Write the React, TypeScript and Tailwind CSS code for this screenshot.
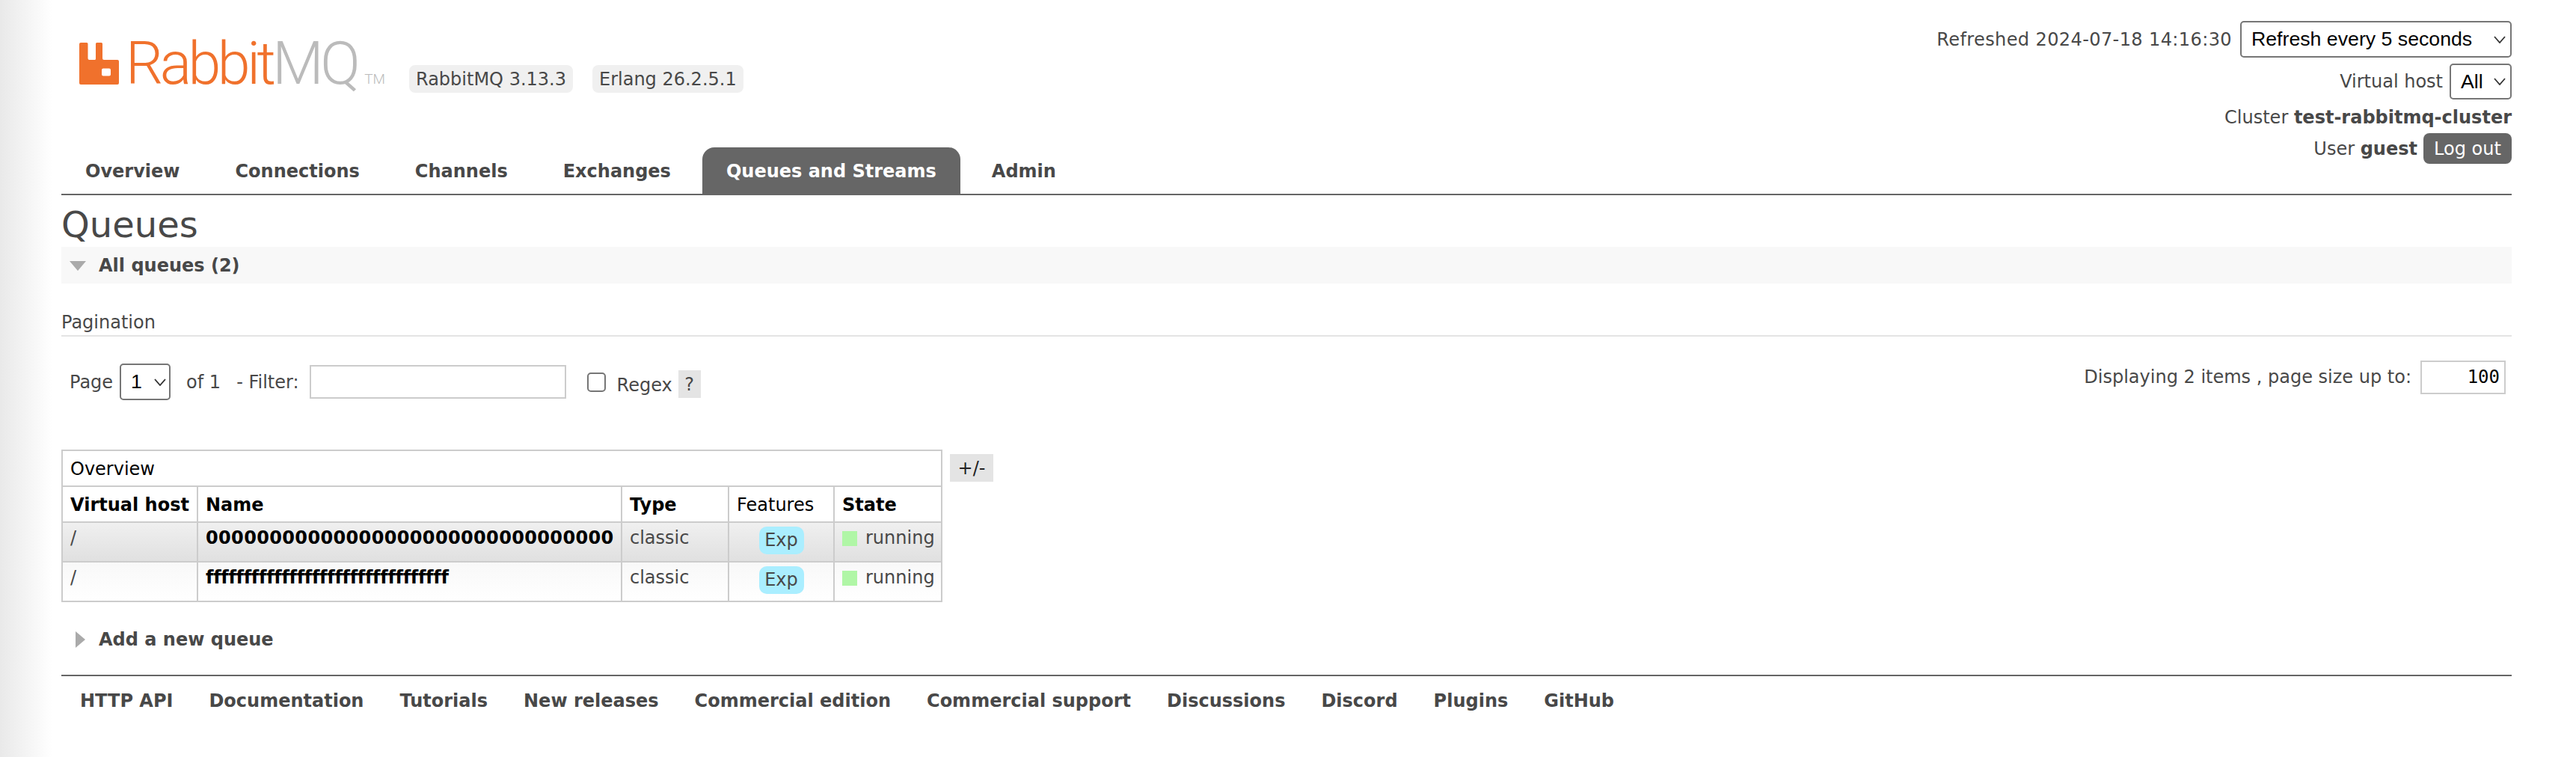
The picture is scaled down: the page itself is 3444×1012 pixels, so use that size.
import { FC, ReactNode } from "react";

const tabs = ["Overview", "Connections", "Channels", "Exchanges", "Queues and Streams", "Admin"];
const footerLinks = [
  "HTTP API",
  "Documentation",
  "Tutorials",
  "New releases",
  "Commercial edition",
  "Commercial support",
  "Discussions",
  "Discord",
  "Plugins",
  "GitHub",
];
const queues = [
  {
    name: "00000000000000000000000000000000",
    row: "bg-gradient-to-b from-[#f0f0f0] to-[#e0e0e0]",
    spacing: "tracking-[0.35px]",
  },
  {
    name: "ffffffffffffffffffffffffffffffff",
    row: "bg-gradient-to-b from-[#f8f8f8] to-[#ffffff]",
    spacing: "tracking-[-0.3px]",
  },
];

const Logo: FC = () => (
  <div className="flex items-start w-[441px] h-[60px]">
    <svg width="53" height="56" viewBox="0 0 53 56" className="shrink-0">
      <path
        fill="#f0712c"
        fillRule="evenodd"
        d="M2 0h8a1.5 1.5 0 0 1 1.500 1.500V21a2 2 0 0 0 2 2h7a1.500 1.500 0 0 0 1.500-1.500V1.500A1.500 1.500 0 0 1 23.500 0h6a1.500 1.500 0 0 1 1.500 1.500V21a2 2 0 0 0 2 2h18a2 2 0 0 1 2 2v29a2 2 0 0 1-2 2H2a2 2 0 0 1-2-2V2a2 2 0 0 1 2-2zm30 34.500a2 2 0 0 0-2 2v6a2 2 0 0 0 2 2h8a2 2 0 0 0 2-2v-6a2 2 0 0 0-2-2z"
      />
    </svg>
    <span className="font-['Roboto',sans-serif] font-light text-[79px] leading-[56px] tracking-[-4.5px] ml-[9px] text-[#f0712c] h-[56px]">
      Rabbit<span className="text-[#bbbbbb]">MQ</span>
    </span>
    <span className="font-['Roboto',sans-serif] font-light text-[19px] leading-[14px] text-[#bbbbbb] mt-[42px] ml-[10px]">TM</span>
  </div>
);

const Badge: FC<{ children: ReactNode }> = ({ children }) => (
  <span className="inline-flex items-center justify-center h-[37px] px-[9px] bg-[#f0f0f0] rounded-[8px] text-[24px] leading-none">
    {children}
  </span>
);

const SelectArrow: FC = () => (
  <svg width="16" height="10" viewBox="0 0 16 10" className="shrink-0">
    <polyline points="1,1 8,9 15,1" fill="none" stroke="#333333" strokeWidth="1.800" />
  </svg>
);

const FakeSelect: FC<{ label: string; className: string }> = ({ label, className }) => (
  <div className={`flex items-center justify-between bg-white border-2 border-[#767676] rounded-[5px] pl-[13px] pr-[6px] font-['Liberation_Sans',sans-serif] text-[26.7px] text-black ${className}`}>
    <span>{label}</span>
    <SelectArrow />
  </div>
);

export default function App() {
  return (
    <div className="min-h-[1012px] bg-gradient-to-r from-[#e9e9e9] to-white bg-no-repeat bg-[length:70px_100%] pl-[82px] pr-[86px] font-['DejaVu_Sans',sans-serif] text-[24px] text-[#484848]">
      <header className="flex justify-between h-[261px] border-b-2 border-[#666666]">
        <div className="flex flex-col justify-between">
          <div className="flex items-start pt-[57px] pl-[24px]">
            <Logo />
            <div className="flex gap-[26px] mt-[30px]">
              <Badge>RabbitMQ 3.13.3</Badge>
              <Badge>Erlang 26.2.5.1</Badge>
            </div>
          </div>
          <nav className="flex gap-[10px] h-[62px]">
            {tabs.map((tab) => (
              <a
                key={tab}
                className={`flex items-center px-[32px] pt-[2px] font-bold rounded-t-[16px] ${tab === "Queues and Streams" ? "bg-[#666666] text-white" : ""}`}
              >
                {tab}
              </a>
            ))}
          </nav>
        </div>
        <div className="flex flex-col items-end pt-[28px] leading-none">
          <div className="flex items-center gap-[11px]">
            <span className="tracking-[0.4px]">Refreshed 2024-07-18 14:16:30</span>
            <FakeSelect label="Refresh every 5 seconds" className="w-[363px] h-[49px]" />
          </div>
          <div className="flex items-center gap-[9px] mt-[8px]">
            <span>Virtual host</span>
            <FakeSelect label="All" className="w-[83px] h-[48px]" />
          </div>
          <div className="mt-[12px] h-[28px]">
            Cluster <b>test-rabbitmq-cluster</b>
          </div>
          <div className="flex items-center gap-[8px] mt-[5px]">
            <span>
              User <b>guest</b>
            </span>
            <span className="flex items-center justify-center w-[118px] h-[41px] bg-[#666666] text-white rounded-[8px]">Log out</span>
          </div>
        </div>
      </header>

      <h1 className="text-[48px] leading-[60px] pt-[9px] font-normal">Queues</h1>

      <section className="flex items-center h-[49px] bg-[#f8f8f8] pl-[11px] font-bold">
        <span className="w-0 h-0 border-x-[11px] border-x-transparent border-t-[13px] border-t-[#aaaaaa] mr-[17px] mt-[2px]" />
        All queues (2)
      </section>

      <div className="mt-[37px] h-[34px] border-b-2 border-[#e4e4e4] leading-[30px]">Pagination</div>

      {/* pagination row */}
      <div className="flex justify-between mt-[32px] h-[53px]">
        <div className="flex items-center pl-[11px] h-[49px] mt-[4px]">
          <span>Page</span>
          <FakeSelect label="1" className="w-[68px] h-[49px] ml-[9px] !pl-[13px] !pr-[4px]" />
          <span className="ml-[21px]">of 1</span>
          <span className="ml-[21px]">- Filter:</span>
          <input className="w-[343px] h-[45px] ml-[14px] border-2 border-[#cccccc] bg-white" />
          <span className="w-[25px] h-[26px] ml-[28px] border-2 border-[#767676] rounded-[5px] bg-white" />
          <span className="ml-[15px] mt-[9px]">Regex</span>
          <span className="flex items-center justify-center w-[30px] h-[37px] ml-[8px] mt-[6px] bg-[#e4e4e4]">?</span>
        </div>
        <div className="flex items-start pr-[8px]">
          <span className="leading-[45px]">Displaying 2 items , page size up to:</span>
          <div className="w-[114px] h-[45px] ml-[12px] border-2 border-[#cccccc] bg-white text-right pr-[6px] leading-[41px] font-['DejaVu_Sans_Mono',monospace] text-black">
            100
          </div>
        </div>
      </div>

      <div className="flex items-start mt-[66px]">
        <table className="w-[1176px] table-fixed border-collapse border-2 border-[#cccccc] text-left">
          <colgroup>
            <col className="w-[181px]" />
            <col className="w-[567px]" />
            <col className="w-[143px]" />
            <col className="w-[141px]" />
            <col className="w-[144px]" />
          </colgroup>
          <thead className="text-black">
            <tr className="h-[48px]">
              <th colSpan={5} className="border-2 border-[#cccccc] px-[10px] pt-[2px] font-normal">
                Overview
              </th>
            </tr>
            <tr className="h-[48px]">
              <th className="border-2 border-[#cccccc] px-[10px] pt-[2px] font-bold whitespace-nowrap">Virtual host</th>
              <th className="border-2 border-[#cccccc] px-[10px] pt-[2px] font-bold">Name</th>
              <th className="border-2 border-[#cccccc] px-[10px] pt-[2px] font-bold">Type</th>
              <th className="border-2 border-[#cccccc] px-[10px] pt-[2px] font-normal">Features</th>
              <th className="border-2 border-[#cccccc] px-[10px] pt-[2px] font-bold">State</th>
            </tr>
          </thead>
          <tbody>
            {queues.map((q) => (
              <tr key={q.name} className={`h-[53px] ${q.row}`}>
                <td className="border-2 border-[#cccccc] px-[10px] align-top pt-[2px]">/</td>
                <td className={`border-2 border-[#cccccc] px-[10px] align-top pt-[2px] font-bold text-black whitespace-nowrap ${q.spacing}`}>{q.name}</td>
                <td className="border-2 border-[#cccccc] px-[10px] align-top pt-[2px]">classic</td>
                <td className="border-2 border-[#cccccc] align-top pt-[5px]">
                  <span className="block mx-auto w-[60px] h-[37px] text-center leading-[37px] rounded-[10px] bg-[#aaeeff]">Exp</span>
                </td>
                <td className="border-2 border-[#cccccc] px-[10px] align-top pt-[2px] whitespace-nowrap">
                  <span className="inline-block w-[20px] h-[20px] bg-[#b0f6a6] mr-[11px] align-[-3px]" />
                  running
                </td>
              </tr>
            ))}
          </tbody>
        </table>
        <span className="flex items-center justify-center w-[58px] h-[37px] ml-[10px] mt-[6px] bg-[#e4e4e4] text-[#222222]">+/-</span>
      </div>

      <section className="flex items-center h-[49px] mt-[25px] pl-[19px] font-bold">
        <span className="w-0 h-0 border-y-[11px] border-y-transparent border-l-[13px] border-l-[#aaaaaa] mr-[18px]" />
        Add a new queue
      </section>

      <footer className="flex gap-[48px] mt-[23px] pt-[15px] pl-[25px] border-t-2 border-[#666666] font-bold">
        {footerLinks.map((link) => (
          <a key={link}>{link}</a>
        ))}
      </footer>
    </div>
  );
}
